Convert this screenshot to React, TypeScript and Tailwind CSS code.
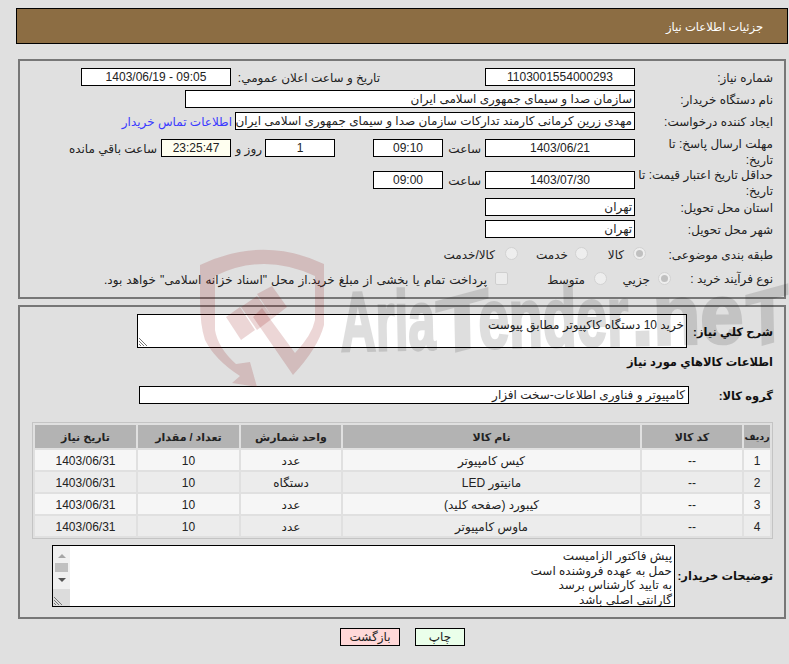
import React from "react";

const box = "h-[18px] shrink-0 border border-black bg-white text-[12px] leading-[17px] whitespace-nowrap overflow-hidden";
const label = "shrink-0 text-[12px] leading-[16px] text-[#222] whitespace-nowrap";
const bold = "shrink-0 text-[11.5px] font-bold leading-[16px] text-[#111] whitespace-nowrap";

function Field({ w, children, cls = "" }: { w: string; children?: React.ReactNode; cls?: string }) {
  return <div className={`${box} ${w} ${cls}`}>{children}</div>;
}

function Radio({ on }: { on?: boolean }) {
  return (
    <span className="flex h-[13px] w-[13px] shrink-0 items-center justify-center rounded-full border border-[#d2d2d2] bg-[#eeeeee]">
      {on && <span className="h-[7px] w-[7px] rounded-full bg-[#c0c0c0]" />}
    </span>
  );
}

const rows = [
  ["1", "--", "کیس کامپیوتر", "عدد", "10", "1403/06/31"],
  ["2", "--", "مانیتور LED", "دستگاه", "10", "1403/06/31"],
  ["3", "--", "کیبورد (صفحه کلید)", "عدد", "10", "1403/06/31"],
  ["4", "--", "ماوس کامپیوتر", "عدد", "10", "1403/06/31"],
];

function Watermark() {
  return (
    <svg className="pointer-events-none absolute left-0 top-0 z-20" width="789" height="664" viewBox="0 0 789 664">
      <g fill="#880000" fillOpacity="0.16" fillRule="evenodd">
        <path d="M200,265 Q263,235 324,264 L324,325 Q318,348 293,375 L253,317 L262,308 L295,353 Q312,335 315,320 L315,276 Q263,252 215,276 L215,330 Q218,348 236,364 L250,362 L257,387 L232,383 L240,376 Q215,360 205,340 Q200,325 200,300 Z" />
        <path d="M226,317 L240,307 L255,330 L241,340 Z" />
        <path d="M241,307 L257,296 L273,318 L257,330 Z" />
        <path d="M257,294 L272,286 L287,307 L273,318 Z" />
      </g>
      <g
        opacity="0.125"
        fill="#000"
        stroke="#000"
        strokeWidth="3"
        fontFamily="'Liberation Sans', sans-serif"
        fontWeight="700"
        fontSize="84"
        direction="ltr"
        transform="rotate(-1.2 340 352)"
      >
        <text x="341" y="351" textLength="95" lengthAdjust="spacingAndGlyphs">Aria</text>
        <text x="437" y="352" fontSize="78" textLength="52" lengthAdjust="spacingAndGlyphs" transform="translate(462 352) skewY(-14) translate(-462 -352)">T</text>
        <text x="479" y="351" textLength="150" lengthAdjust="spacingAndGlyphs">ender</text>
        <text x="632" y="351" textLength="112" lengthAdjust="spacingAndGlyphs">.ne</text>
        <text x="747" y="352" fontSize="76" textLength="42" lengthAdjust="spacingAndGlyphs" transform="translate(767 352) skewY(-14) translate(-767 -352)">T</text>
      </g>
    </svg>
  );
}

function TextBoxResizer() {
  return (
    <svg className="absolute bottom-0 left-0" width="11" height="11" viewBox="0 0 11 11" stroke="#777" strokeWidth="1">
      <path d="M1 2 L9 10 M1 5 L6 10 M1 8 L3 10" />
    </svg>
  );
}

export default function App() {
  return (
    <div dir="rtl" className="relative h-[664px] w-[789px] overflow-hidden bg-[#e0e0e0] [font-family:'Liberation_Sans','DejaVu_Sans',sans-serif] text-[#222]">
      <Watermark />
      <div className="relative z-10 pt-[8px]">
        <header className="mr-[1px] flex h-[36px] w-[772px] items-center border border-black bg-[#8c6d43] pr-[24px] pt-[4px] text-[11.5px] text-white">
          جزئیات اطلاعات نیاز
        </header>

        <section className="mr-[3px] mt-[15px] h-[240px] w-[768px] border-2 border-[#777] pr-[11px] pt-[7px]">
          <div className="flex items-center">
            <span className={`${label} w-[138px] pt-[2px]`}>شماره نیاز:</span>
            <Field w="w-[150px]" cls="text-center">1103001554000293</Field>
            <span className="w-[105px] shrink-0" />
            <span className={`${label} w-[149px] pt-[2px]`}>تاریخ و ساعت اعلان عمومي:</span>
            <Field w="w-[150px]" cls="text-center"><span dir="ltr">1403/06/19 - 09:05</span></Field>
          </div>
          <div className="mt-[4px] flex items-center">
            <span className={`${label} w-[138px] pt-[2px]`}>نام دستگاه خریدار:</span>
            <Field w="w-[450px]" cls="pr-[2px]">سازمان صدا و سیمای جمهوری اسلامی ایران</Field>
          </div>
          <div className="mt-[4px] flex items-center">
            <span className={`${label} w-[138px] pt-[2px]`}>ایجاد کننده درخواست:</span>
            <Field w="w-[400px]" cls="pr-[2px]">مهدی زرین کرمانی کارمند تدارکات سازمان صدا و سیمای جمهوری اسلامی ایران</Field>
            <a className="mr-[3px] shrink-0 pt-[1px] text-[12px] leading-[16px] text-[#3a3aff]">اطلاعات تماس خریدار</a>
          </div>
          <div className="mt-[9px] flex h-[27px] items-start">
            <span className={`${label} w-[138px] -mt-[3px] pl-[26px] leading-[14px] whitespace-normal!`}>مهلت ارسال پاسخ: تا تاریخ:</span>
            <Field w="w-[150px]" cls="text-center">1403/06/21</Field>
            <span className={`${label} w-[42px] pr-[4px] pt-[2px]`}>ساعت</span>
            <Field w="w-[70px]" cls="text-center">09:10</Field>
            <span className="w-[38px] shrink-0" />
            <Field w="w-[70px]" cls="text-center">1</Field>
            <span className={`${label} w-[34px] pr-[3px] pt-[2px]`}>روز و</span>
            <Field w="w-[70px]" cls="text-center bg-[#fffff0]!">23:25:47</Field>
            <span className={`${label} pr-[4px] pt-[2px]`}>ساعت باقي مانده</span>
          </div>
          <div className="mt-[5px] flex h-[27px] items-start">
            <span className={`${label} w-[138px] -mt-[4px] leading-[14px] whitespace-normal!`}>حداقل تاریخ اعتبار قیمت: تا تاریخ:</span>
            <Field w="w-[150px]" cls="text-center">1403/07/30</Field>
            <span className={`${label} w-[42px] pr-[4px] pt-[2px]`}>ساعت</span>
            <Field w="w-[70px]" cls="text-center">09:00</Field>
          </div>
          <div className="flex items-center">
            <span className={`${label} w-[138px] pt-[2px]`}>استان محل تحویل:</span>
            <Field w="w-[150px]" cls="pr-[2px]">تهران</Field>
          </div>
          <div className="mt-[4px] flex items-center">
            <span className={`${label} w-[138px] pt-[2px]`}>شهر محل تحویل:</span>
            <Field w="w-[150px]" cls="pr-[2px]">تهران</Field>
          </div>
          <div className="mt-[5px] flex h-[20px] items-center">
            <span className={`${label} w-[105px] pt-[4px]`}>طبقه بندی موضوعی:</span>
            <span className="w-[22px] shrink-0" />
            <Radio on />
            <span className={`${label} mr-[9px] w-[36px] pt-[4px]`}>کالا</span>
            <Radio />
            <span className={`${label} mr-[7px] w-[50px] pt-[4px]`}>خدمت</span>
            <Radio />
            <span className={`${label} mr-[10px] pt-[4px]`}>کالا/خدمت</span>
          </div>
          <div className="mt-[5px] flex h-[20px] items-center">
            <span className={`${label} w-[80px] pt-[2px]`}>نوع فرآیند خرید :</span>
            <span className="w-[22px] shrink-0" />
            <Radio on />
            <span className={`${label} mr-[8px] w-[36px] pt-[4px]`}>جزیي</span>
            <span className="w-[7px] shrink-0" />
            <Radio />
            <span className={`${label} mr-[9px] w-[77px] pt-[4px]`}>متوسط</span>
            <span className="h-[13px] w-[13px] shrink-0 rounded-[2px] border border-[#cfcfcf] bg-[#ececec]" />
            <span className={`${label} mr-[8px] pt-[4px] [word-spacing:0.8px]`}>پرداخت تمام یا بخشی از مبلغ خرید.از محل "اسناد خزانه اسلامی" خواهد بود.</span>
          </div>
        </section>

        <section className="mr-[3px] mt-[6px] h-[314px] w-[768px] border-2 border-[#777] pr-[11px] pt-[7px]">
          <div className="flex items-center">
            <span className={`${bold} w-[86px] pt-[2px]`}>شرح کلي نياز:</span>
            <div className="relative h-[34px] w-[550px] shrink-0 border border-black bg-white pr-[2px] pt-[2px] text-[12px] leading-[16px]">
              خرید 10 دستگاه کاکپیوتر مطابق پیوست
              <TextBoxResizer />
            </div>
          </div>
          <div className={`${bold} mt-[6px]`}>اطلاعات کالاهاي مورد نياز</div>
          <div className="mt-[16px] flex items-center">
            <span className={`${bold} w-[84px] pt-[2px]`}>گروه کالا:</span>
            <Field w="w-[550px]" cls="pr-[3px]">کامپیوتر و فناوری اطلاعات-سخت افزار</Field>
          </div>
          <table className="mt-[18px] w-[741px] table-fixed border-separate border-spacing-[2px] border border-[#c4c4c4] bg-[#e0e0e0] text-center text-[12px]">
            <colgroup>
              <col className="w-[26px]" />
              <col className="w-[100px]" />
              <col className="w-[297px]" />
              <col className="w-[100px]" />
              <col className="w-[101px]" />
              <col className="w-[101px]" />
            </colgroup>
            <thead>
              <tr className="h-[23px] bg-[#b3b3b3]">
                <th className="p-0 pt-[2px] text-[9.5px] font-bold">ردیف</th>
                {["کد کالا", "نام کالا", "واحد شمارش", "تعداد / مقدار", "تاریخ نیاز"].map((h) => (
                  <th key={h} className="p-0 pt-[2px] text-[11px] font-bold">{h}</th>
                ))}
              </tr>
            </thead>
            <tbody>
              {rows.map((r, i) => (
                <tr key={r[0]} className={`h-[20px] ${i % 2 ? "bg-[#ececec]" : "bg-[#f6f6f6]"}`}>
                  {r.map((c, j) => (
                    <td key={j} className="p-0 pt-[2px]">{c}</td>
                  ))}
                </tr>
              ))}
            </tbody>
          </table>
          <div className="mt-[6px] flex items-center">
            <span className={`${bold} w-[98px]`}>توضیحات خریدار:</span>
            <div className="flex h-[62px] w-[623px] shrink-0 border border-black bg-white">
              <div className="flex-1 overflow-hidden pr-[2px] pt-[3px] text-[12px] leading-[14.5px]">
                <div>پیش فاکتور الزامیست</div>
                <div>حمل به عهده فروشنده است</div>
                <div>به تایید کارشناس برسد</div>
                <div>گارانتی اصلی باشد</div>
              </div>
              <div className="relative flex w-[17px] shrink-0 flex-col items-center bg-[#f0f0f0]">
                <span className="mt-[8px] h-0 w-0 border-x-[4px] border-b-[4px] border-x-transparent border-b-[#a6a6a6]" />
                <span className="mt-[5px] h-[9px] w-[13px] bg-[#c0c0c0]" />
                <span className="mt-[6px] h-0 w-0 border-x-[4px] border-t-[4px] border-x-transparent border-t-[#555]" />
                <div className="absolute bottom-0 left-0 h-[17px] w-[17px] bg-[#dcdcdc]">
                  <TextBoxResizer />
                </div>
              </div>
            </div>
          </div>
        </section>

        <div className="mt-[9px] flex justify-center gap-[15px] pl-[16px]">
          <button className="h-[18px] w-[50px] border border-black bg-[#eaffea] text-[12px] leading-[16px] text-[#222]">چاپ</button>
          <button className="h-[18px] w-[60px] border border-black bg-[#ffd8d8] text-[12px] leading-[16px] text-[#222]">بازگشت</button>
        </div>
      </div>
    </div>
  );
}
